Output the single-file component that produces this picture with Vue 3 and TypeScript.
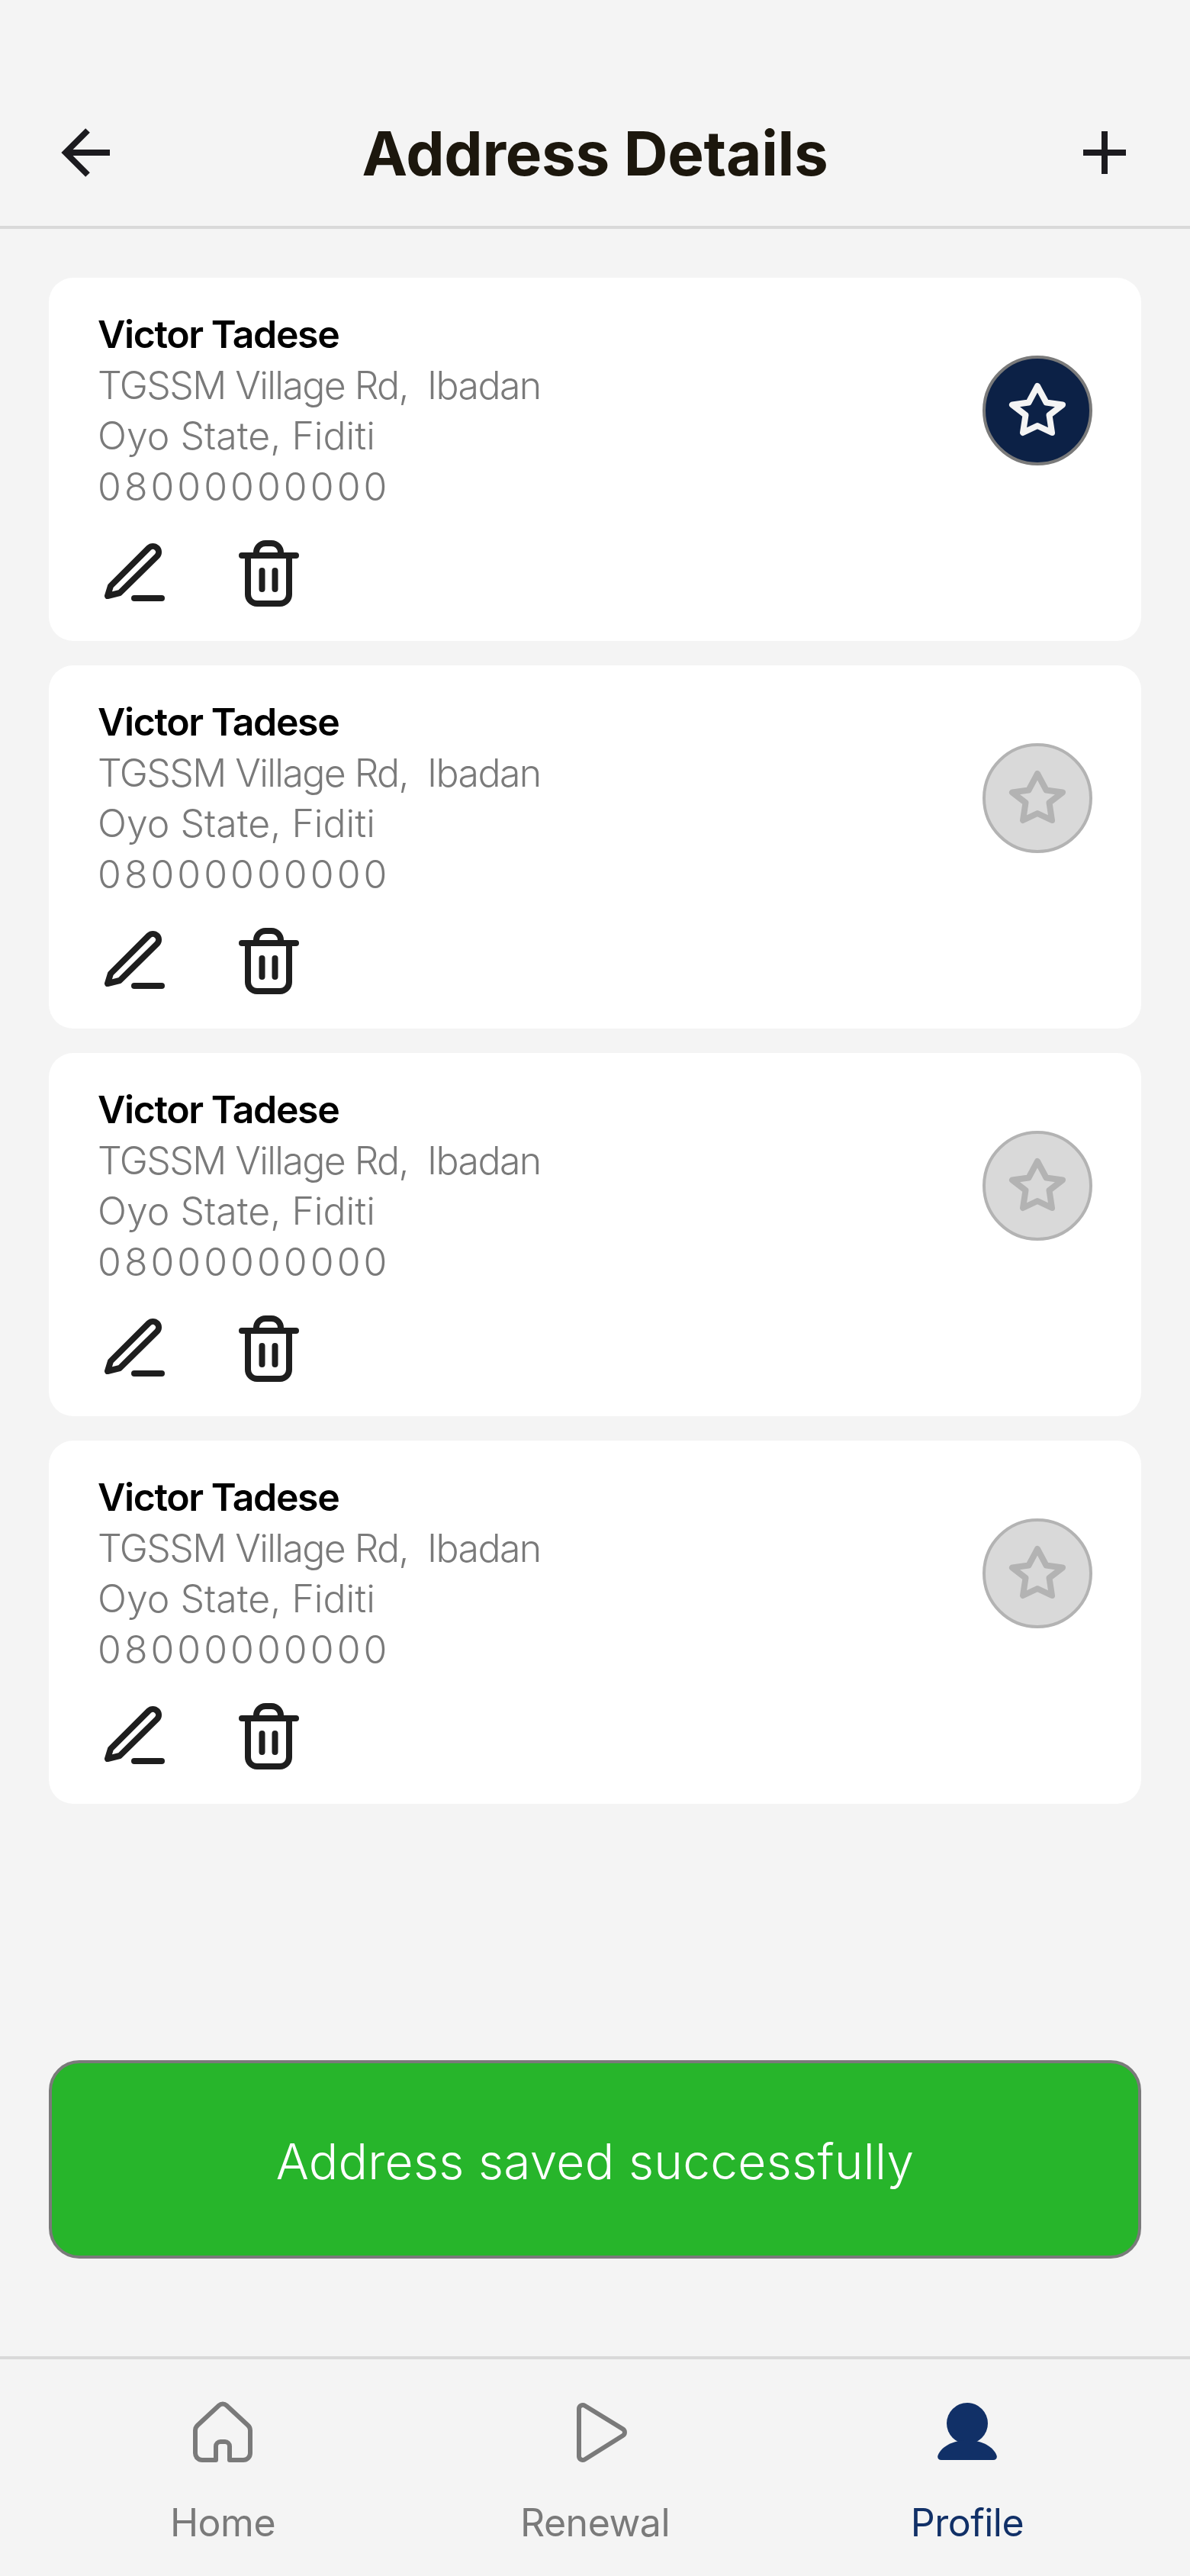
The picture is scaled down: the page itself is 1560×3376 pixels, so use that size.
<script setup lang="ts">
type Address = {
  id: number
  name: string
  street: string
  state: string
  phone: string
  isDefault: boolean
}

const addresses: Address[] = [1, 2, 3, 4].map((id) => ({
  id,
  name: 'Victor Tadese',
  street: 'TGSSM Village Rd,\u00a0 Ibadan',
  state: 'Oyo State, Fiditi',
  phone: '08000000000',
  isDefault: id === 1,
}))
</script>

<template>
  <div class="page">
    <header class="topbar">
      <svg class="bar-icon" viewBox="0 0 96 96" fill="none" stroke="#1c1b1f" stroke-width="8">
        <path d="M80 48H24M51 19L22 48L51 77" />
      </svg>
      <h1 class="title">Address Details</h1>
      <svg class="bar-icon" viewBox="0 0 96 96" fill="none" stroke="#1c1b1f" stroke-width="8">
        <path d="M20 48H76M48 20V76" />
      </svg>
    </header>

    <main class="list">
      <article v-for="item in addresses" :key="item.id" class="card">
        <div class="info">
          <div class="name">{{ item.name }}</div>
          <div class="line street">{{ item.street }}</div>
          <div class="line state">{{ item.state }}</div>
          <div class="line phone">{{ item.phone }}</div>
          <div class="actions">
            <svg class="action-icon" viewBox="0 0 96 96" fill="none" stroke="#1e1e1e" stroke-width="8" stroke-linecap="round" stroke-linejoin="round">
              <path d="M13 77L17 64L67 14.2A7.6 7.6 0 0 1 77.8 25L29 73Z" />
              <path d="M48 80H84" />
            </svg>
            <svg class="action-icon" viewBox="0 0 96 96" fill="none" stroke="#1e1e1e" stroke-width="8" stroke-linecap="round" stroke-linejoin="round">
              <path d="M13 24H84" />
              <path d="M21 24V75a12 12 0 0 0 12 12H63a12 12 0 0 0 12-12V24" />
              <path d="M32 24V20a12 12 0 0 1 12-12H52a12 12 0 0 1 12 12V24" />
              <path d="M39.5 44V68M56.5 44V68" />
            </svg>
          </div>
        </div>
        <div class="star" :class="{ active: item.isDefault }">
          <svg viewBox="0 0 136 136" fill="none" stroke="currentColor" stroke-width="8" stroke-linejoin="round">
            <path d="M68 36L79.5 57.5L101 60.5L83.5 74L87 97L68 88L49 97L52.5 74L35 60.5L56.5 57.5Z" />
          </svg>
        </div>
      </article>
    </main>

    <div class="toast">Address saved successfully</div>

    <nav class="tabs">
      <div class="tab">
        <svg class="tab-icon" viewBox="0 0 96 96" fill="none" stroke="#7a7a7a" stroke-width="6" stroke-linejoin="round">
          <path d="M39 86V68a6 6 0 0 1 6-6h6a6 6 0 0 1 6 6V86H75a9 9 0 0 0 9-9V47a9 9 0 0 0-3-6.5L53 14.5a7.5 7.5 0 0 0-10 0L15 40.5a9 9 0 0 0-3 6.5V77a9 9 0 0 0 9 9Z" />
        </svg>
        <span>Home</span>
      </div>
      <div class="tab">
        <svg class="tab-icon" viewBox="0 0 96 96" fill="none" stroke="#7a7a7a" stroke-width="6" stroke-linejoin="round">
          <path d="M27 19V81a5 5 0 0 0 7.6 4.3L84.5 54a5 5 0 0 0 0-8.6L34.6 14.7A5 5 0 0 0 27 19Z" />
        </svg>
        <span>Renewal</span>
      </div>
      <div class="tab current">
        <svg class="tab-icon" viewBox="0 0 96 96" fill="#113067">
          <circle cx="48" cy="38" r="27" />
          <path d="M14 86C10 86 8.5 83 9.5 80C14 68 30 60 48 60C66 60 82 68 86.5 80C87.5 83 86 86 82 86Z" />
        </svg>
        <span>Profile</span>
      </div>
    </nav>
  </div>
</template>

<style scoped>
.page {
  display: flex;
  flex-direction: column;
  height: 3376px;
  background: #f4f4f4;
  font-family: Inter, "Noto Sans", sans-serif;
}
.topbar {
  display: flex;
  align-items: center;
  justify-content: space-between;
  box-sizing: border-box;
  height: 300px;
  padding: 104px 64px 0;
  border-bottom: 4px solid #d9d9d9;
}
.bar-icon {
  width: 96px;
  height: 96px;
}
.title {
  margin: 0;
  font-size: 80px;
  font-weight: 700;
  letter-spacing: -0.3px;
  color: #1c170d;
}
.list {
  flex: 1;
  display: flex;
  flex-direction: column;
  gap: 32px;
  padding: 64px 64px 0;
}
.card {
  display: flex;
  justify-content: space-between;
  align-items: flex-start;
  box-sizing: border-box;
  height: 476px;
  padding: 41px 64px 0;
  background: #fff;
  border-radius: 32px;
}
.name {
  font-size: 50px;
  line-height: 66.5px;
  font-weight: 600;
  letter-spacing: -1.4px;
  color: #000;
}
.line {
  font-size: 50px;
  line-height: 66.5px;
  font-weight: 300;
  color: #7a7a7a;
}
.street {
  letter-spacing: -1.6px;
}
.state {
  letter-spacing: 0;
}
.phone {
  letter-spacing: 4px;
}
.actions {
  display: flex;
  gap: 80px;
  margin-top: 33px;
}
.action-icon {
  width: 96px;
  height: 96px;
}
.star {
  display: flex;
  box-sizing: border-box;
  width: 144px;
  height: 144px;
  margin-top: 61px;
  border: 4px solid #b3b3b3;
  border-radius: 50%;
  background: #d9d9d9;
  color: #b3b3b3;
}
.star svg {
  width: 136px;
  height: 136px;
}
.star.active {
  border-color: #7a7a7a;
  background: #0c2146;
  color: #f4f4f4;
}
.toast {
  display: flex;
  align-items: center;
  justify-content: center;
  box-sizing: border-box;
  height: 260px;
  margin: 0 64px 128px;
  padding-top: 4px;
  border: 4px solid #7a7a7a;
  border-radius: 40px;
  background: #27b52b;
  font-size: 64px;
  font-weight: 300;
  letter-spacing: 0.3px;
  color: #fff;
}
.tabs {
  display: grid;
  grid-template-columns: repeat(3, 1fr);
  box-sizing: border-box;
  height: 288px;
  padding: 46px 48px 0;
  border-top: 4px solid #d9d9d9;
}
.tab {
  display: flex;
  flex-direction: column;
  align-items: center;
  gap: 39px;
  font-size: 50px;
  line-height: 66px;
  font-weight: 400;
  letter-spacing: -0.5px;
  color: #7a7a7a;
}
.tab.current {
  color: #113067;
}
.tab-icon {
  width: 96px;
  height: 96px;
}
</style>
